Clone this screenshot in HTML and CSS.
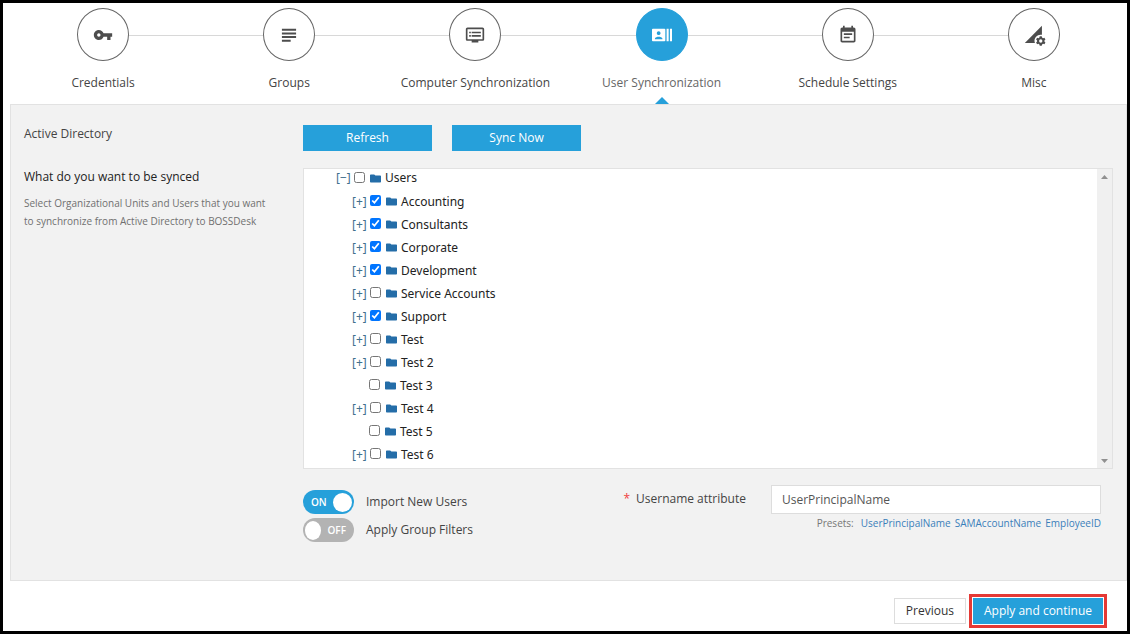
FILE: index.html
```html
<!DOCTYPE html>
<html lang="en">
<head>
<meta charset="utf-8">
<meta name="viewport" content="width=device-width, initial-scale=1">
<title>User Synchronization</title>
<link rel="stylesheet" href="styles.css">
</head>
<body class="page">
<svg class="sprite" aria-hidden="true">
  <symbol id="folder" viewBox="0 0 11 9"><path d="M0 1.2Q0 .4.8.4H4.2L5.4 1.5H10.2Q11 1.5 11 2.3V7.8Q11 8.6 10.2 8.6H.8Q0 8.6 0 7.8Z"/></symbol>
</svg>
<nav class="steps" aria-label="Setup steps">
  <a class="step" href="#credentials">
    <span class="step-circle"><svg class="step-icon" viewBox="0 0 24 24"><path d="M12.65 10C11.83 7.67 9.61 6 7 6c-3.31 0-6 2.69-6 6s2.69 6 6 6c2.61 0 4.83-1.67 5.65-4H17v4h4v-4h2v-4H12.65zM7 14c-1.1 0-2-.9-2-2s.9-2 2-2 2 .9 2 2-.9 2-2 2z"/></svg></span>
    <span class="step-label">Credentials</span>
  </a>
  <a class="step" href="#groups">
    <span class="step-circle"><svg class="step-icon" viewBox="0 0 24 24"><path d="M3.500 4.500h17v2.400h-17zM3.500 8.900h17v2.400h-17zM3.500 13.300h17v2.400h-17zM3.500 17.700h10.500v2.400H3.500z"/></svg></span>
    <span class="step-label">Groups</span>
  </a>
  <a class="step" href="#computers">
    <span class="step-circle"><svg class="step-icon" viewBox="0 0 24 24"><path d="M21 3H3c-1.100 0-2 .9-2 2v12c0 1.100.9 2 2 2h5v2h8v-2h5c1.100 0 2-.9 2-2V5c0-1.100-.9-2-2-2zm0 14H3V5h18v12zM19 8H8v2h11V8zm0 4H8v2h11v-2zM7 8H5v2h2V8zm0 4H5v2h2v-2z"/></svg></span>
    <span class="step-label">Computer Synchronization</span>
  </a>
  <a class="step step-active" href="#users" aria-current="step">
    <span class="step-circle"><svg class="step-icon" viewBox="0 0 24 24"><path d="M21.500 4.500v15H24v-15h-2.500zm-4 15H20v-15h-2.500v15zM15 4.500H1c-.55 0-1 .45-1 1v13c0 .55.45 1 1 1h14c.55 0 1-.45 1-1v-13c0-.55-.45-1-1-1zM8 7.500c1.240 0 2.250 1.010 2.250 2.250S9.240 12 8 12 5.750 10.990 5.750 9.750 6.760 7.500 8 7.500zM12.500 17h-9v-.75c0-1.500 3-2.250 4.500-2.250s4.500.75 4.500 2.250V17z"/></svg></span>
    <span class="step-label">User Synchronization</span>
  </a>
  <a class="step" href="#schedule">
    <span class="step-circle"><svg class="step-icon" viewBox="0 0 24 24"><path d="M17 10H7v2h10v-2zm2-7h-1V1h-2v2H8V1H6v2H5c-1.110 0-2 .9-2 2v14c0 1.100.89 2 2 2h14c1.100 0 2-.9 2-2V5c0-1.100-.9-2-2-2zm0 16H5V8h14v11zm-5-5H7v2h7v-2z"/></svg></span>
    <span class="step-label">Schedule Settings</span>
  </a>
  <a class="step" href="#misc">
    <span class="step-circle"><svg class="step-icon" viewBox="0 0 24 24"><path d="M1 21.500L21.500 1V11.800A7.300 7.300 0 0 0 13.100 21.500Z"/><path fill-rule="evenodd" d="M18.900 13.500h2.400l.4 1.600 1.200.7 1.600-.5 1.200 2.100-1.200 1.100v1.400l1.200 1.100-1.200 2.100-1.600-.5-1.200.7-.4 1.600h-2.400l-.4-1.600-1.200-.7-1.600.5-1.200-2.100 1.200-1.100v-1.400l-1.200-1.100 1.200-2.100 1.600.5 1.200-.7zM20.100 17.200a2 2 0 1 0 0 4 2 2 0 0 0 0-4z"/></svg></span>
    <span class="step-label">Misc</span>
  </a>
</nav>
<main class="panel">
  <section class="intro">
    <h1 class="intro-title">Active Directory</h1>
    <h2 class="intro-question">What do you want to be synced</h2>
    <p class="intro-help">Select Organizational Units and Users that you want to synchronize from Active Directory to BOSSDesk</p>
  </section>
  <section class="content">
    <div class="actions">
      <button class="btn btn-primary btn-wide" type="button">Refresh</button>
      <button class="btn btn-primary btn-wide" type="button">Sync Now</button>
    </div>
    <div class="tree-box">
      <ul class="tree">
        <li class="node root"><button class="expander" type="button">[−]</button><label class="unit"><input class="check" type="checkbox"><svg class="folder"><use href="#folder"/></svg>Users</label></li>
        <li class="node child"><button class="expander" type="button">[+]</button><label class="unit"><input class="check" type="checkbox" checked><svg class="folder"><use href="#folder"/></svg>Accounting</label></li>
        <li class="node child"><button class="expander" type="button">[+]</button><label class="unit"><input class="check" type="checkbox" checked><svg class="folder"><use href="#folder"/></svg>Consultants</label></li>
        <li class="node child"><button class="expander" type="button">[+]</button><label class="unit"><input class="check" type="checkbox" checked><svg class="folder"><use href="#folder"/></svg>Corporate</label></li>
        <li class="node child"><button class="expander" type="button">[+]</button><label class="unit"><input class="check" type="checkbox" checked><svg class="folder"><use href="#folder"/></svg>Development</label></li>
        <li class="node child"><button class="expander" type="button">[+]</button><label class="unit"><input class="check" type="checkbox"><svg class="folder"><use href="#folder"/></svg>Service Accounts</label></li>
        <li class="node child"><button class="expander" type="button">[+]</button><label class="unit"><input class="check" type="checkbox" checked><svg class="folder"><use href="#folder"/></svg>Support</label></li>
        <li class="node child"><button class="expander" type="button">[+]</button><label class="unit"><input class="check" type="checkbox"><svg class="folder"><use href="#folder"/></svg>Test</label></li>
        <li class="node child"><button class="expander" type="button">[+]</button><label class="unit"><input class="check" type="checkbox"><svg class="folder"><use href="#folder"/></svg>Test 2</label></li>
        <li class="node leaf"><label class="unit"><input class="check" type="checkbox"><svg class="folder"><use href="#folder"/></svg>Test 3</label></li>
        <li class="node child"><button class="expander" type="button">[+]</button><label class="unit"><input class="check" type="checkbox"><svg class="folder"><use href="#folder"/></svg>Test 4</label></li>
        <li class="node leaf"><label class="unit"><input class="check" type="checkbox"><svg class="folder"><use href="#folder"/></svg>Test 5</label></li>
        <li class="node child"><button class="expander" type="button">[+]</button><label class="unit"><input class="check" type="checkbox"><svg class="folder"><use href="#folder"/></svg>Test 6</label></li>
      </ul>
      <div class="scrollbar" aria-hidden="true">
        <svg class="arrow" viewBox="0 0 7 4"><path d="M0 4L3.500 0L7 4Z"/></svg>
        <svg class="arrow" viewBox="0 0 7 4"><path d="M0 0H7L3.500 4Z"/></svg>
      </div>
    </div>
    <div class="options">
      <div class="switches">
        <label class="switch"><input class="switch-input" type="checkbox" checked><span class="track track-on" aria-hidden="true"><span class="state">ON</span><span class="knob"></span></span>Import New Users</label>
        <label class="switch"><input class="switch-input" type="checkbox"><span class="track" aria-hidden="true"><span class="knob"></span><span class="state">OFF</span></span>Apply Group Filters</label>
      </div>
      <div class="attribute">
        <label class="attribute-label" for="username-attribute"><span class="required">*</span>Username attribute</label>
        <div class="attribute-field">
          <input class="text-input" id="username-attribute" type="text" value="UserPrincipalName">
          <div class="presets"><span class="presets-label">Presets:</span><a class="preset" href="#upn">UserPrincipalName</a><a class="preset" href="#sam">SAMAccountName</a><a class="preset" href="#employee">EmployeeID</a></div>
        </div>
      </div>
    </div>
  </section>
</main>
<footer class="footer">
  <button class="btn btn-plain" type="button">Previous</button>
  <div class="highlight"><button class="btn btn-primary" type="button">Apply and continue</button></div>
</footer>
</body>
</html>
```
FILE: styles.css
```css
* { box-sizing: border-box; }

.page {
  margin: 0;
  min-height: 100vh;
  border: 3px solid #000;
  padding: 5px 0 3px 7px;
  display: flex;
  flex-direction: column;
  background: #fff;
  color: #444;
  font: 12px/18px "Open Sans", "Noto Sans", sans-serif;
}
.sprite { position: absolute; width: 0; height: 0; }

.steps {
  display: grid;
  grid-template-columns: repeat(6, 1fr);
}
.step {
  position: relative;
  display: flex;
  flex-direction: column;
  align-items: center;
  gap: 13px;
  height: 96px;
  color: #444;
  text-decoration: none;
}
.step + .step::before {
  content: "";
  position: absolute;
  top: 27px;
  left: calc(-50% + 26px);
  right: calc(50% + 26px);
  height: 1px;
  background: #d8d8d8;
}
.step-circle {
  width: 52px;
  height: 53px;
  border: 1px solid #666;
  border-radius: 50%;
  display: grid;
  place-items: center;
}
.step-icon { width: 20px; height: 20px; fill: #4d4d4d; overflow: visible; }
.step-active { color: #666; }
.step-active .step-circle { background: #26a0da; border-color: #26a0da; }
.step-active .step-icon { fill: #fff; }
.step-active::after {
  content: "";
  position: absolute;
  bottom: 0;
  border: 7px solid transparent;
  border-top-width: 0;
  border-bottom-color: #26a0da;
}

.panel {
  flex: 1;
  display: grid;
  grid-template-columns: 279px 1fr;
  border: 1px solid #e2e2e2;
  background: #f2f2f2;
}
.intro { padding: 20px 14px 0 13px; }
.intro-title, .intro-question { margin: 0; font-size: 12px; font-weight: 400; line-height: 18px; }
.intro-question { margin-top: 25px; color: #222; }
.intro-help { margin: 8px 0 0; font-size: 10px; color: #707070; }

.content { padding: 20px 13px 0; }
.actions { display: flex; gap: 20px; }
.btn { height: 26px; padding: 0 11px; border: 0; font: inherit; }
.btn-primary { background: #26a0da; color: #fff; }
.btn-wide { width: 129px; }
.btn-plain { border: 1px solid #ddd; background: #fff; color: #333; }

.tree-box {
  display: flex;
  margin-top: 17px;
  border: 1px solid #e2e2e2;
  background: #fff;
}
.tree { flex: 1; margin: 0; padding: 0 0 2px 32px; list-style: none; font-family: "Noto Sans", "Open Sans", sans-serif; color: #222; }
.node { display: flex; align-items: center; height: 23px; }
.root { height: 18px; margin-bottom: 3px; }
.child { padding-left: 16px; }
.leaf { padding-left: 33px; }
.expander { width: 18px; padding: 0; border: 0; background: none; color: #41708d; font: 12px/18px "Noto Sans", sans-serif; text-align: left; white-space: nowrap; }
.unit { display: flex; align-items: center; gap: 4px; }
.check { width: 11px; height: 11px; margin: 0 1px 2px 0; }
.folder { width: 11px; height: 9px; fill: #246da8; }
.scrollbar {
  width: 15px;
  padding: 6px 0 5px;
  display: flex;
  flex-direction: column;
  justify-content: space-between;
  align-items: center;
  background: #f0f0f0;
}
.arrow { width: 7px; height: 4px; fill: #909090; }

.options { display: flex; justify-content: space-between; padding: 16px 12px 0 0; }
.switches { display: flex; flex-direction: column; gap: 4px; padding-top: 5px; }
.switch { position: relative; display: flex; align-items: center; gap: 12px; height: 24px; }
.switch-input { position: absolute; left: 0; width: 51px; height: 24px; margin: 0; opacity: 0; }
.track {
  display: flex;
  align-items: center;
  justify-content: space-between;
  width: 51px;
  height: 24px;
  padding: 0 2px;
  border-radius: 12px;
  background: #b3b3b3;
  color: #fff;
}
.track-on { background: #26a0da; }
.state { padding: 0 6px; font-size: 10px; font-weight: 600; }
.knob { width: 19px; height: 19px; border-radius: 50%; background: #fff; }

.attribute { display: flex; gap: 25px; }
.attribute-label { padding-top: 5px; }
.required { margin-right: 6px; color: #f04040; }
.attribute-field { width: 330px; }
.text-input { display: block; width: 100%; height: 29px; padding: 0 10px; border: 1px solid #ddd; background: #fff; color: #555; font: inherit; }
.presets { display: flex; justify-content: flex-end; gap: 4px; font-size: 10px; color: #777; }
.presets-label { margin-right: 3px; }
.preset { color: #3b7fba; text-decoration: none; }

.footer { display: flex; justify-content: flex-end; align-items: center; gap: 3px; padding: 13px 20px 0 0; }
.highlight { display: flex; padding: 1px; border: 3px solid #e53935; }
```
